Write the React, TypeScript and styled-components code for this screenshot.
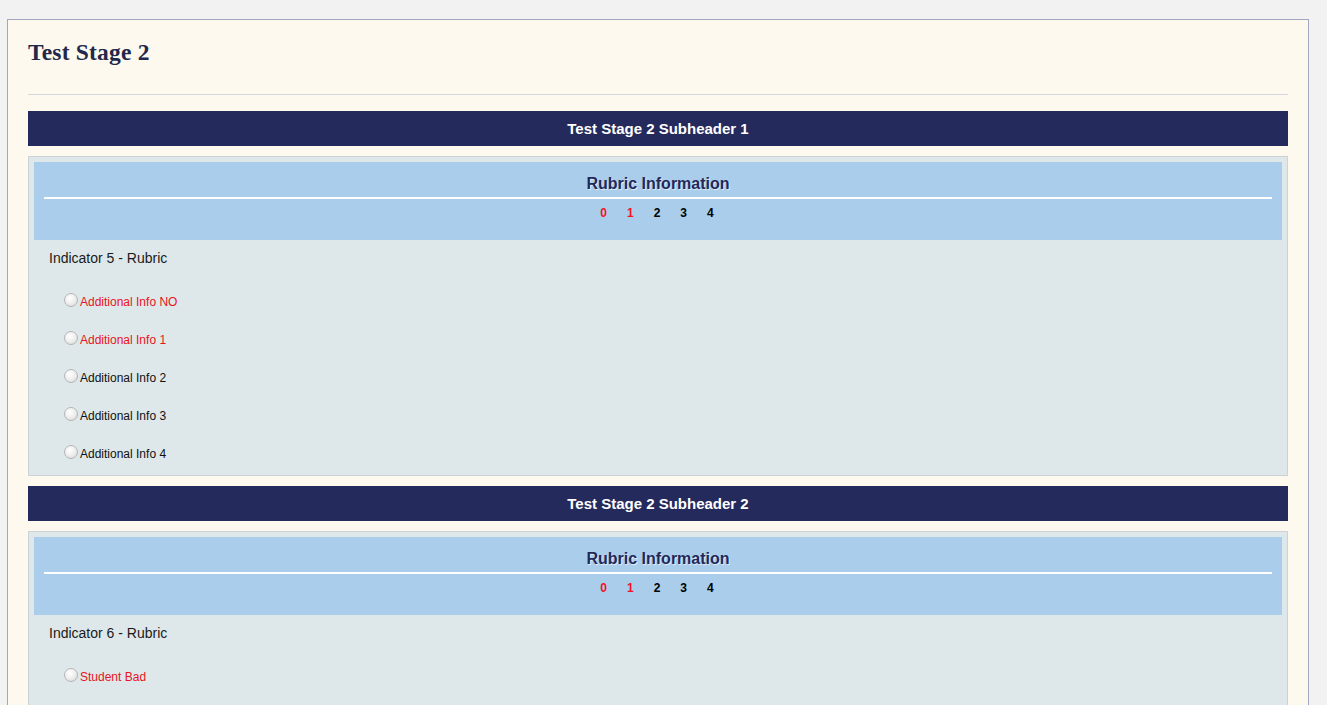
import React from "react";
import styled, { createGlobalStyle } from "styled-components";

const Global = createGlobalStyle`
  html, body { margin: 0; padding: 0; background: #f2f2f2; overflow: hidden; }
  body { font-family: "Liberation Sans", Arial, sans-serif; }
`;

const Page = styled.div`
  padding: 19px 18px 0 7px;
`;

const Panel = styled.div`
  background: #fdf9ef;
  border: 1px solid #a3a6c3;
  padding: 17px 20px 40px 20px;
  min-height: 900px;
`;

const Title = styled.h1`
  margin: 0;
  font-family: "Liberation Serif", "Times New Roman", serif;
  font-weight: bold;
  font-size: 23.5px;
  line-height: 30px;
  color: #23284a;
  letter-spacing: 0.2px;
`;

const Rule = styled.hr`
  margin: 27px 0 16px;
  border: 0;
  border-top: 1px solid #d6d8de;
  height: 0;
`;

const Subheader = styled.div`
  background: #252a5c;
  color: #fff;
  height: 35px;
  display: flex;
  align-items: center;
  justify-content: center;
  font-weight: bold;
  font-size: 15px;
  margin-bottom: 10px;
`;

const Box = styled.div`
  background: #dee8ea;
  border: 1px solid #cdd3d4;
  padding: 5px 5px 0;
  margin-bottom: 10px;
`;

const RubricHeader = styled.div`
  background: #a9cdea;
  height: 78px;
  padding: 12px 10px 0;
  box-sizing: border-box;
  display: flex;
  flex-direction: column;
  align-items: stretch;
`;

const RubricTitle = styled.div`
  text-align: center;
  font-weight: bold;
  font-size: 16px;
  line-height: 20px;
  color: #23285a;
  text-shadow: 1px 1px 1px rgba(255, 255, 255, 0.7);
`;

const HeaderLine = styled.div`
  height: 2px;
  background: #fff;
  margin-top: 3px;
`;

const Levels = styled.div`
  display: flex;
  justify-content: center;
  gap: 20px;
  margin-top: 8px;
  padding-right: 2px;
`;

const Level = styled.span<{ $bad?: boolean }>`
  font-weight: bold;
  font-size: 12px;
  line-height: 13px;
  color: ${(p) => (p.$bad ? "#f0161f" : "#000")};
`;

const Indicator = styled.div`
  font-size: 14px;
  line-height: 16px;
  color: #1a1a1a;
  padding: 10px 0 0 15px;
`;

const Options = styled.div`
  display: flex;
  flex-direction: column;
  padding: 28px 0 13px 30px;
  gap: 22px;
`;

const Option = styled.label`
  display: flex;
  align-items: center;
  height: 16px;
`;

const Radio = styled.span`
  width: 12px;
  height: 12px;
  border-radius: 50%;
  border: 1px solid #b5b5b5;
  background: radial-gradient(circle at 40% 35%, #ffffff 0%, #ececec 55%, #d2d2d2 100%);
  margin-top: -5px;
  margin-right: 2px;
  flex: none;
`;

const OptionText = styled.span<{ $bad?: boolean }>`
  font-size: 12px;
  color: ${(p) => (p.$bad ? "#e8141c" : "#111")};
`;

type Opt = { label: string; bad?: boolean };

const Section = ({ title, indicator, options }: { title: string; indicator: string; options: Opt[] }) => (
  <>
    <Subheader>{title}</Subheader>
    <Box>
      <RubricHeader>
        <RubricTitle>Rubric Information</RubricTitle>
        <HeaderLine />
        <Levels>
          <Level $bad>0</Level>
          <Level $bad>1</Level>
          <Level>2</Level>
          <Level>3</Level>
          <Level>4</Level>
        </Levels>
      </RubricHeader>
      <Indicator>{indicator}</Indicator>
      <Options>
        {options.map((o) => (
          <Option key={o.label}>
            <Radio />
            <OptionText $bad={o.bad}>{o.label}</OptionText>
          </Option>
        ))}
      </Options>
    </Box>
  </>
);

export default function App() {
  return (
    <>
      <Global />
      <Page>
        <Panel>
          <Title>Test Stage 2</Title>
          <Rule />
          <Section
            title="Test Stage 2 Subheader 1"
            indicator="Indicator 5 - Rubric"
            options={[
              { label: "Additional Info NO", bad: true },
              { label: "Additional Info 1", bad: true },
              { label: "Additional Info 2" },
              { label: "Additional Info 3" },
              { label: "Additional Info 4" },
            ]}
          />
          <Section
            title="Test Stage 2 Subheader 2"
            indicator="Indicator 6 - Rubric"
            options={[
              { label: "Student Bad", bad: true },
              { label: "Student Poor", bad: true },
              { label: "Student Okay" },
              { label: "Student Good" },
              { label: "Student Great" },
            ]}
          />
        </Panel>
      </Page>
    </>
  );
}
